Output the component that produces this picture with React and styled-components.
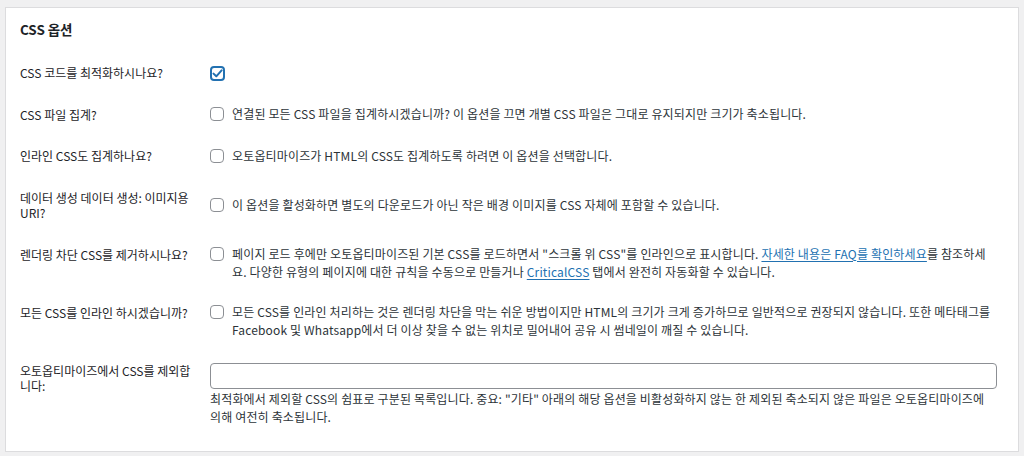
import React from "react";
import styled, { createGlobalStyle } from "styled-components";

const Global = createGlobalStyle`
  html, body { margin: 0; padding: 0; background: #f0f0f1; }
  body {
    font-family: "Noto Sans CJK KR", "Noto Sans", sans-serif;
    color: #1d2327;
  }
  * { box-sizing: border-box; }
`;

const Page = styled.div`
  padding: 7px 5px 5px 5px;
`;

const Panel = styled.section`
  background: #fff;
  border: 1px solid #dcdcde;
  padding: 0 20px 14px 14px;
`;

const Title = styled.h2`
  margin: 11px 0 13px;
  font-size: 13.5px;
  line-height: 20px;
  font-weight: 700;
  color: #1d2327;
  letter-spacing: -0.1px;
`;

const Row = styled.div`
  display: grid;
  grid-template-columns: 190px 1fr;
`;

const Label = styled.div`
  align-self: start;
  padding: 13px 10px 13px 0;
  font-size: 12px;
  line-height: 15.5px;
  letter-spacing: 0;
  color: #1d2327;
`;

const Cell = styled.div`
  align-self: center;
  padding: 11px 0;
`;

const Option = styled.label`
  display: flex;
  align-items: flex-start;
  gap: 8px;
`;

const Box = styled.span`
  flex: none;
  width: ${(p) => (p.$checked ? 15 : 14)}px;
  height: ${(p) => (p.$checked ? 15 : 14)}px;
  margin-top: 2px;
  border-radius: 4px;
  border: ${(p) => (p.$checked ? "2px solid #2271b1" : "1px solid #8c8f94")};
  background: #fff;
  display: flex;
  align-items: center;
  justify-content: center;
`;

const Text = styled.span`
  font-size: 12px;
  line-height: 18px;
  letter-spacing: 0.15px;
  color: #2c3338;
`;

const Link = styled.a`
  color: #2271b1;
  text-decoration: underline;
  text-underline-offset: 2px;
`;

const Input = styled.input`
  display: block;
  width: 787px;
  height: 26px;
  margin: 2px 0 0;
  border: 1px solid #8c8f94;
  border-radius: 4px;
  background: #fff;
  padding: 0 8px;
  font: inherit;
`;

const Description = styled.p`
  margin: 1px 0 0;
  font-size: 12px;
  line-height: 18px;
  letter-spacing: 0.15px;
  color: #2c3338;
`;

const Check = () => (
  <svg width="11" height="11" viewBox="0 0 11 11" aria-hidden="true">
    <path d="M1.5 5.6 L4.3 8.3 L9.6 2.4" fill="none" stroke="#2271b1" strokeWidth="2" strokeLinecap="round" strokeLinejoin="round" />
  </svg>
);

const Checkbox = ({ checked }) => (
  <Box $checked={checked}>{checked && <Check />}</Box>
);

const rows = [
  { label: "CSS 코드를 최적화하시나요?", checked: true, text: null },
  {
    label: "CSS 파일 집계?",
    text: "연결된 모든 CSS 파일을 집계하시겠습니까? 이 옵션을 끄면 개별 CSS 파일은 그대로 유지되지만 크기가 축소됩니다.",
  },
  {
    label: "인라인 CSS도 집계하나요?",
    text: "오토옵티마이즈가 HTML의 CSS도 집계하도록 하려면 이 옵션을 선택합니다.",
  },
  {
    label: "데이터 생성 데이터 생성: 이미지용 URI?",
    text: "이 옵션을 활성화하면 별도의 다운로드가 아닌 작은 배경 이미지를 CSS 자체에 포함할 수 있습니다.",
  },
  {
    label: "렌더링 차단 CSS를 제거하시나요?",
    text: (
      <>
        페이지 로드 후에만 오토옵티마이즈된 기본 CSS를 로드하면서 "스크롤 위 CSS"를 인라인으로 표시합니다.{" "}
        <Link href="#">자세한 내용은 FAQ를 확인하세요</Link>를 참조하세요. 다양한 유형의 페이지에 대한 규칙을 수동으로 만들거나{" "}
        <Link href="#">CriticalCSS</Link> 탭에서 완전히 자동화할 수 있습니다.
      </>
    ),
  },
  {
    label: "모든 CSS를 인라인 하시겠습니까?",
    text: "모든 CSS를 인라인 처리하는 것은 렌더링 차단을 막는 쉬운 방법이지만 HTML의 크기가 크게 증가하므로 일반적으로 권장되지 않습니다. 또한 메타태그를 Facebook 및 Whatsapp에서 더 이상 찾을 수 없는 위치로 밀어내어 공유 시 썸네일이 깨질 수 있습니다.",
  },
];

export default function App() {
  return (
    <>
      <Global />
      <Page>
        <Panel>
          <Title>CSS 옵션</Title>
          {rows.map((r, i) => (
            <Row key={i}>
              <Label>{r.label}</Label>
              <Cell>
                <Option>
                  <Checkbox checked={!!r.checked} />
                  {r.text && <Text>{r.text}</Text>}
                </Option>
              </Cell>
            </Row>
          ))}
          <Row>
            <Label>오토옵티마이즈에서 CSS를 제외합니다:</Label>
            <Cell>
              <Input type="text" />
              <Description>
                최적화에서 제외할 CSS의 쉼표로 구분된 목록입니다. 중요: "기타" 아래의 해당 옵션을 비활성화하지 않는 한 제외된 축소되지 않은 파일은 오토옵티마이즈에 의해 여전히 축소됩니다.
              </Description>
            </Cell>
          </Row>
        </Panel>
      </Page>
    </>
  );
}
